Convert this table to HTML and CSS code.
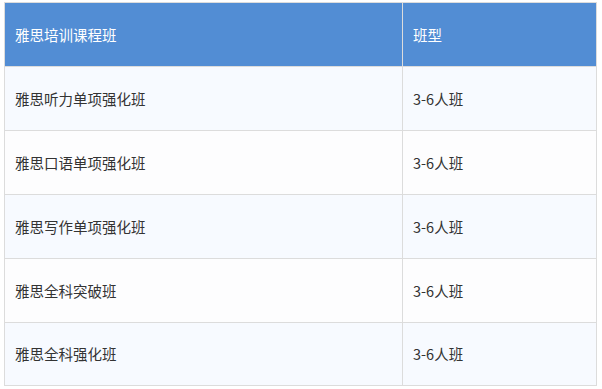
FILE: index.html
```html
<!DOCTYPE html>
<html lang="zh">
<head>
<meta charset="utf-8">
<link rel="stylesheet" href="styles.css">
</head>
<body>
<table class="course-table">
  <thead>
    <tr><th class="col-name">雅思培训课程班</th><th class="col-type">班型</th></tr>
  </thead>
  <tbody>
    <tr><td>雅思听力单项强化班</td><td>3-6人班</td></tr>
    <tr><td>雅思口语单项强化班</td><td>3-6人班</td></tr>
    <tr><td>雅思写作单项强化班</td><td>3-6人班</td></tr>
    <tr><td>雅思全科突破班</td><td>3-6人班</td></tr>
    <tr><td>雅思全科强化班</td><td>3-6人班</td></tr>
  </tbody>
</table>
</body>
</html>
```

FILE: styles.css
```css
html, body {
  margin: 0;
  padding: 0;
  background: #ffffff;
}
body {
  padding: 2px 0 0 4px;
  font-family: "Noto Sans CJK SC", "Noto Sans", sans-serif;
  font-size: 14.5px;
  color: #333333;
}
.course-table {
  border-collapse: collapse;
  width: 593px;
  table-layout: fixed;
}
.course-table th,
.course-table td {
  border: 1px solid #dcdcdc;
  height: 63px;
  padding: 0 0 0 10px;
  text-align: left;
  vertical-align: middle;
  box-sizing: border-box;
  line-height: 20px;
}
.course-table th {
  background: #528dd4;
  color: #ffffff;
  font-weight: normal;
  height: 64px;
}
.col-name { width: 398px; }
.course-table tbody tr:nth-child(odd) td { background: #f7faff; }
.course-table tbody tr:nth-child(even) td { background: #fdfdfe; }
.course-table tbody td { height: 64px; }
.course-table tbody tr:last-child td { height: 63px; }
```
